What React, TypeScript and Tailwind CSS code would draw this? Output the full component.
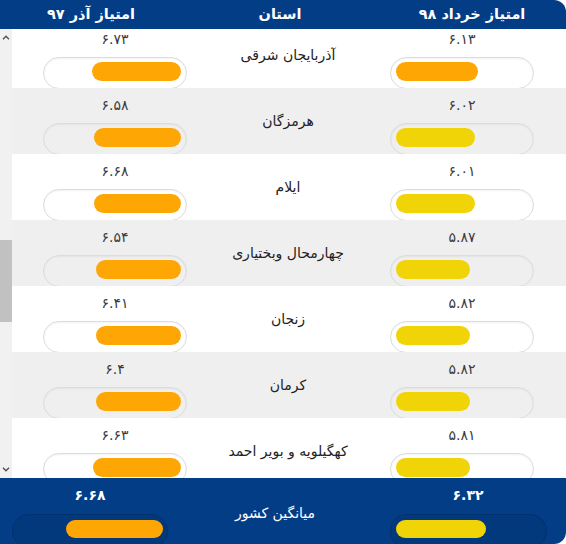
type Row = {
  name: string;
  now: string;
  prev: string;
  nowW: number;
  prevW: number;
  nowColor: string;
};

const rows: Row[] = [
  { name: "آذربایجان شرقی", now: "۶.۱۳", prev: "۶.۷۳", nowW: 82, prevW: 89, nowColor: "bg-[#fea604]" },
  { name: "هرمزگان", now: "۶.۰۲", prev: "۶.۵۸", nowW: 79, prevW: 87, nowColor: "bg-[#f0d407]" },
  { name: "ایلام", now: "۶.۰۱", prev: "۶.۶۸", nowW: 79, prevW: 87, nowColor: "bg-[#f0d407]" },
  { name: "چهارمحال وبختیاری", now: "۵.۸۷", prev: "۶.۵۴", nowW: 74, prevW: 85, nowColor: "bg-[#f0d407]" },
  { name: "زنجان", now: "۵.۸۲", prev: "۶.۴۱", nowW: 74, prevW: 85, nowColor: "bg-[#f0d407]" },
  { name: "کرمان", now: "۵.۸۲", prev: "۶.۴", nowW: 74, prevW: 85, nowColor: "bg-[#f0d407]" },
  { name: "کهگیلویه و بویر احمد", now: "۵.۸۱", prev: "۶.۶۳", nowW: 74, prevW: 88, nowColor: "bg-[#f0d407]" },
];

function Score({ value, width, color, fromRight }: { value: string; width: number; color: string; fromRight?: boolean }) {
  return (
    <div className="flex flex-col items-center pt-[9px]">
      <div className="h-[16px] text-[14px] leading-[16px] text-[#3a3a3a]">{value}</div>
      <div
        dir="ltr"
        className={`mt-[10px] flex h-[32px] w-[144px] rounded-full border border-[#dcdcdc] px-[5px] pt-[4px] shadow-[inset_0_1px_2px_rgba(0,0,0,0.05)] ${fromRight ? "justify-end" : "justify-start"}`}
      >
        <div className={`h-[19px] rounded-full ${color}`} style={{ width }} />
      </div>
    </div>
  );
}

function Chevron({ down }: { down?: boolean }) {
  return (
    <svg width="8" height="5" viewBox="0 0 8 5" className={down ? "rotate-180" : ""}>
      <path d="M1 4.2 L4 1.2 L7 4.2" fill="none" stroke="#505050" strokeWidth="1.4" />
    </svg>
  );
}

export default function App() {
  return (
    <div dir="rtl" className="flex h-[544px] w-[566px] flex-col bg-white font-['DejaVu_Sans',sans-serif]">
      <div className="grid h-[29px] grid-cols-[188px_1fr_182px] items-center rounded-tr-[12px] bg-[#033d86] text-[14.5px] font-bold text-white">
        <div className="text-center">امتیاز خرداد ۹۸</div>
        <div className="text-center">استان</div>
        <div className="text-center">امتیاز آذر ۹۷</div>
      </div>

      <div className="flex h-[449px]">
        <div className="flex-1 overflow-hidden">
          <div className="-mt-[7px]">
            {rows.map((r, i) => (
              <div
                key={r.name}
                className={`grid h-[66px] grid-cols-[208px_140px_1fr] overflow-hidden ${i % 2 === 1 ? "bg-[#efefef]" : "bg-white"}`}
              >
                <Score value={r.now} width={r.nowW} color={r.nowColor} />
                <div className="flex items-center justify-center text-[14px] text-[#222]">{r.name}</div>
                <Score value={r.prev} width={r.prevW} color="bg-[#fea604]" fromRight />
              </div>
            ))}
          </div>
        </div>
        <div className="flex w-[12px] flex-col bg-[#f1f1f1]">
          <div className="flex h-[17px] items-center justify-center">
            <Chevron />
          </div>
          <div className="h-[194px]" />
          <div className="h-[82px] bg-[#c1c1c1]" />
          <div className="flex-1" />
          <div className="flex h-[17px] items-center justify-center">
            <Chevron down />
          </div>
        </div>
      </div>

      <div className="grid h-[66px] grid-cols-[196px_1fr_180px] overflow-hidden rounded-br-[12px] bg-[#033d86]">
        <div className="flex flex-col items-center pt-[9px]">
          <div className="h-[16px] text-[14px] font-bold leading-[16px] text-white">۶.۳۲</div>
          <div dir="ltr" className="mt-[11px] flex h-[34px] w-[157px] rounded-full border border-[#02316d] bg-[#02387c] px-[5px] pt-[5px]">
            <div className="h-[18px] w-[90px] rounded-full bg-[#f0d407]" />
          </div>
        </div>
        <div className="flex items-center justify-center text-[14px] text-white">میانگین کشور</div>
        <div className="flex flex-col items-center pt-[9px]">
          <div className="h-[16px] text-[14px] font-bold leading-[16px] text-white">۶.۶۸</div>
          <div dir="ltr" className="mt-[11px] flex h-[34px] w-[156px] justify-end rounded-full border border-[#02316d] bg-[#02387c] px-[4px] pt-[5px]">
            <div className="h-[18px] w-[97px] rounded-full bg-[#fea604]" />
          </div>
        </div>
      </div>
    </div>
  );
}
